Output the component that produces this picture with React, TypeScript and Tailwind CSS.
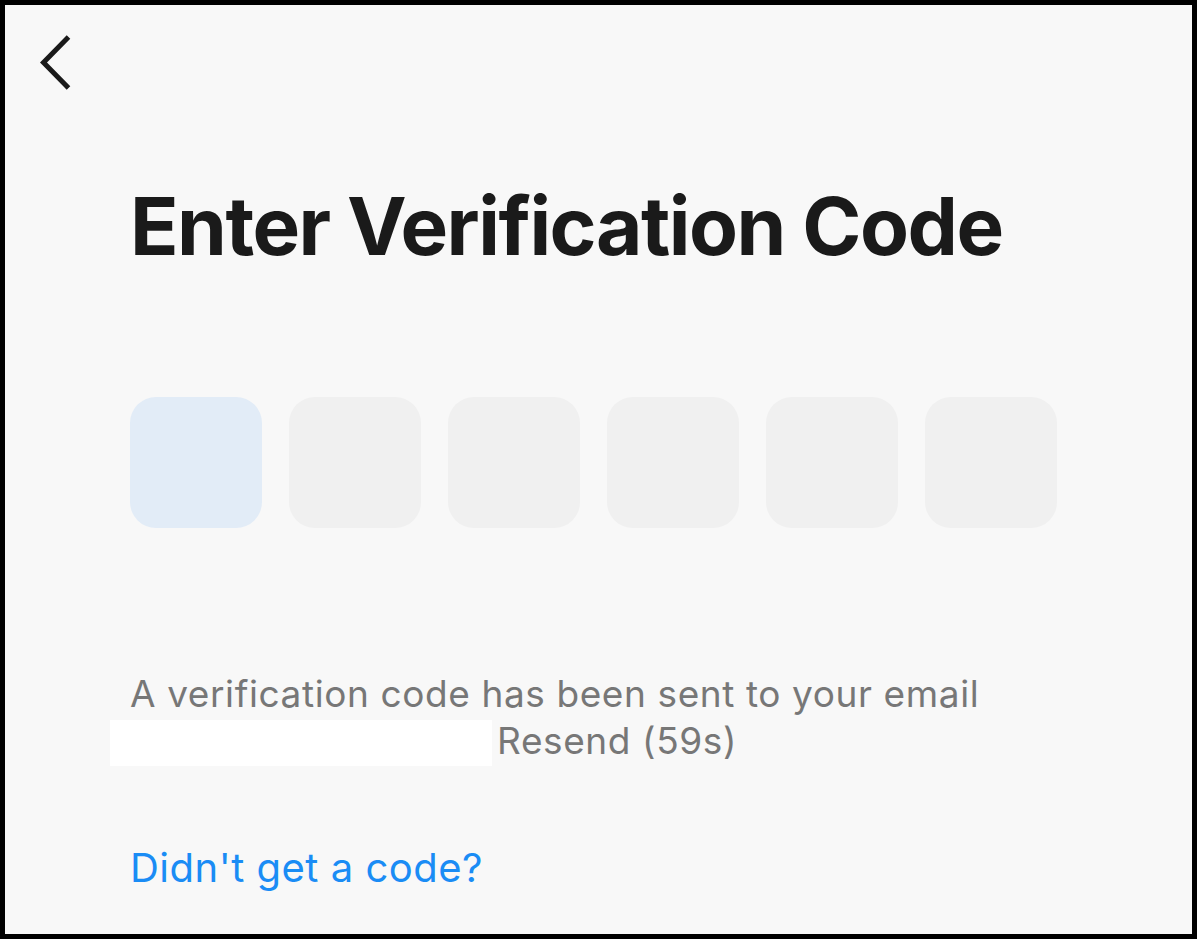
import { useState } from "react"

const font = { fontFamily: "Inter, 'Noto Sans', sans-serif" }

export default function App() {
  const [active] = useState(0)
  const slots = [0, 1, 2, 3, 4, 5]

  return (
    <div
      className="box-border h-[939px] w-[1197px] border-[5px] border-black bg-[#f8f8f8]"
      style={font}
    >
      {/* back */}
      <div className="pl-[33px] pt-[28px]">
        <svg width="36" height="60" viewBox="0 0 36 60" fill="none">
          <path d="M30.5 4 L5.5 29.5 L30.5 55" stroke="#1a1a1a" strokeWidth="5" />
        </svg>
      </div>

      <div className="pl-[125px]">
        <h1 className="mt-[93px] text-[80px] font-bold leading-none tracking-[-1.5px] text-[#1a1a1a]">
          Enter Verification Code
        </h1>

        <div className="mt-[131px] flex gap-[27px]">
          {slots.map((i) => (
            <div
              key={i}
              className={`h-[131px] w-[132px] rounded-[26px] ${
                i === active ? "bg-[#e2ecf7]" : "bg-[#f0f0f0]"
              }`}
            />
          ))}
        </div>

        <p className="mt-[142px] w-[950px] text-[37px] leading-[47px] tracking-[0.6px] text-[#777777]">
          A verification code has been sent to your email{" "}
          <span className="-ml-[20px] -mr-[6px] inline-block h-[46px] w-[382px] bg-white align-[-12px]" />{" "}
          Resend (59s)
        </p>

        <button className="mt-[82px] text-[40px] leading-none tracking-[0.5px] text-[#1a8cf5]">
          Didn't get a code?
        </button>
      </div>
    </div>
  )
}
